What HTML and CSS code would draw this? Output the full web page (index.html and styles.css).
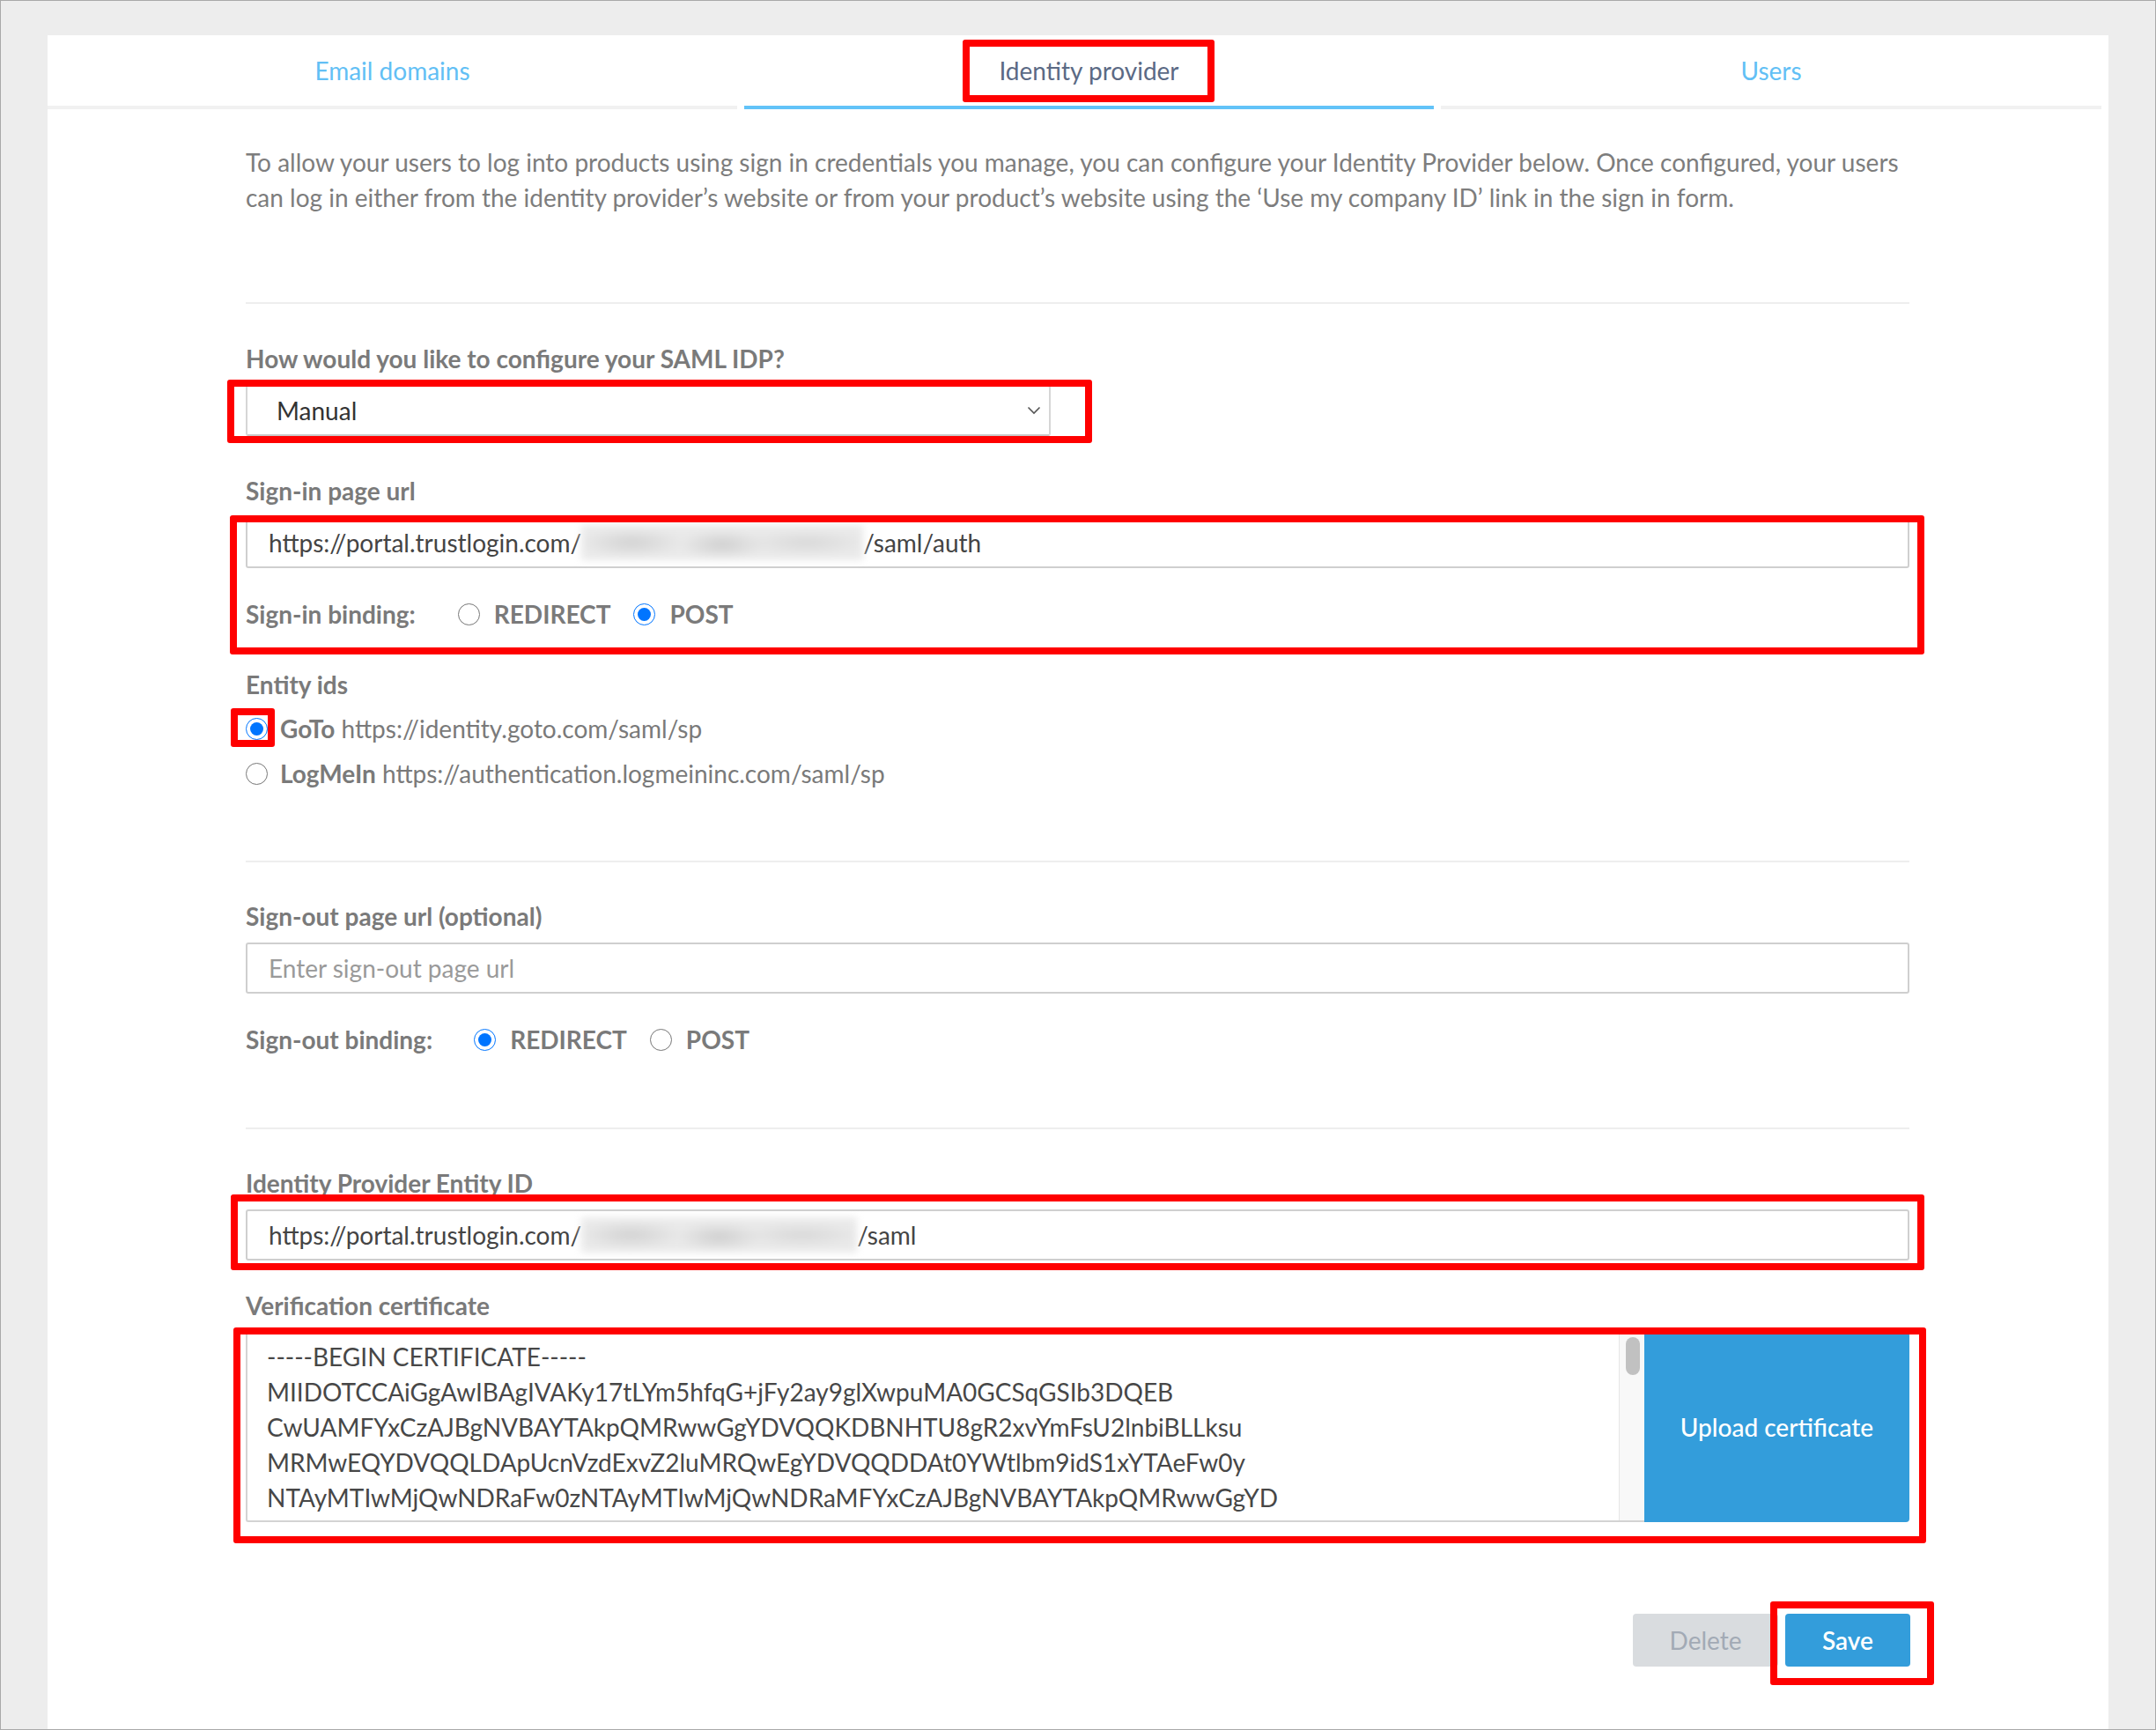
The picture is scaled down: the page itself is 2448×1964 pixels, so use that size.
FILE: index.html
```html
<!DOCTYPE html>
<html lang="en">
<head>
    <meta charset="UTF-8">
    <title>Company ID - Identity provider</title>
    <link rel="stylesheet" href="styles.css">
</head>
<body>
    <div class="frame">
        <div class="panel">
            <nav class="tabs">
                <a class="tab" href="#">Email domains</a>
                <a class="tab tab-active" href="#">Identity provider</a>
                <a class="tab" href="#">Users</a>
            </nav>

            <div class="content">
                <p class="intro">To allow your users to log into products using sign in credentials you manage, you can configure your Identity Provider below. Once configured, your users can log in either from the identity provider&rsquo;s website or from your product&rsquo;s website using the &lsquo;Use my company ID&rsquo; link in the sign in form.</p>

                <hr class="divider divider-first">

                <div class="field-label after-divider">How would you like to configure your SAML IDP?</div>
                <div class="select">
                    <span>Manual</span>
                    <svg class="chevron" width="16" height="10" viewBox="0 0 16 10"><path d="M1.5 1.5 L8 8 L14.5 1.5" fill="none" stroke="#555" stroke-width="1.6"/></svg>
                </div>

                <div class="field-label after-field">Sign-in page url</div>
                <div class="text-input"><span>https://portal.trustlogin.com/</span><span class="blur blur-auth"></span><span>/saml/auth</span></div>

                <div class="binding">
                    <span class="binding-title">Sign-in binding:</span>
                    <label class="choice"><input type="radio" name="signin"> REDIRECT</label>
                    <label class="choice"><input type="radio" name="signin" checked> POST</label>
                </div>

                <div class="field-label after-binding">Entity ids</div>
                <label class="entity entity-first"><input type="radio" name="entity" checked> <span><b>GoTo</b> https://identity.goto.com/saml/sp</span></label>
                <label class="entity"><input type="radio" name="entity"> <span><b>LogMeIn</b> https://authentication.logmeininc.com/saml/sp</span></label>

                <hr class="divider divider-mid">

                <div class="field-label after-divider-small">Sign-out page url (optional)</div>
                <input class="text-input" type="text" placeholder="Enter sign-out page url">

                <div class="binding">
                    <span class="binding-title binding-title-out">Sign-out binding:</span>
                    <label class="choice"><input type="radio" name="signout" checked> REDIRECT</label>
                    <label class="choice"><input type="radio" name="signout"> POST</label>
                </div>

                <hr class="divider divider-last">

                <div class="field-label after-divider-small">Identity Provider Entity ID</div>
                <div class="text-input"><span>https://portal.trustlogin.com/</span><span class="blur blur-entity"></span><span>/saml</span></div>

                <div class="field-label after-input">Verification certificate</div>
                <div class="cert">
                    <div class="cert-input">
                        <div class="cert-text">-----BEGIN CERTIFICATE-----
MIIDOTCCAiGgAwIBAgIVAKy17tLYm5hfqG+jFy2ay9glXwpuMA0GCSqGSIb3DQEB
CwUAMFYxCzAJBgNVBAYTAkpQMRwwGgYDVQQKDBNHTU8gR2xvYmFsU2lnbiBLLksu
MRMwEQYDVQQLDApUcnVzdExvZ2luMRQwEgYDVQQDDAt0YWtlbm9idS1xYTAeFw0y
NTAyMTIwMjQwNDRaFw0zNTAyMTIwMjQwNDRaMFYxCzAJBgNVBAYTAkpQMRwwGgYD</div>
                        <div class="scroll-track"><div class="scroll-thumb"></div></div>
                    </div>
                    <button class="upload" type="button">Upload certificate</button>
                </div>

                <div class="actions">
                    <button class="btn btn-delete" type="button">Delete</button>
                    <button class="btn btn-save" type="button">Save</button>
                </div>
            </div>
        </div>

        <!-- red annotation boxes drawn over the screenshot -->
        <div class="mark mark-tab"></div>
        <div class="mark mark-select"></div>
        <div class="mark mark-signin"></div>
        <div class="mark mark-goto"></div>
        <div class="mark mark-entity"></div>
        <div class="mark mark-cert"></div>
        <div class="mark mark-save"></div>
    </div>
</body>
</html>
```

FILE: styles.css
```css
/* page frame */
body {
    margin: 0;
    font-family: "Lato", "Open Sans", sans-serif;
}

.frame {
    position: relative;
    width: 2448px;
    height: 1964px;
    box-sizing: border-box;
    border: 1px solid #a9a9a9;
    background: #ededed;
    padding: 39px 0 0 53px;
    overflow: hidden;
}

.panel {
    width: 2340px;
    min-height: 1960px;
    background: #fff;
}

/* tabs */
.tabs {
    display: grid;
    grid-template-columns: 783px 783px 750px;
    column-gap: 8px;
}

.tab {
    height: 80px;
    line-height: 80px;
    text-align: center;
    font-size: 28px;
    color: #62bff5;
    text-decoration: none;
    border-bottom: 4px solid #f1f1f1;
}

.tab-active {
    color: #5b6a85;
    border-bottom-color: #62c3f8;
}

/* form */
.content {
    padding: 0 226px 0 225px;
}

.intro {
    margin: 40px 0 0;
    font-size: 28px;
    line-height: 40px;
    color: #7d7d7d;
}

.divider {
    border: 0;
    height: 2px;
    margin: 0;
    background: #eeeeee;
}
.divider-first { margin-top: 99px; }
.divider-mid { margin-top: 79px; }
.divider-last { margin-top: 80px; }

.field-label {
    font-size: 28px;
    line-height: 40px;
    font-weight: 700;
    color: #7a7a7a;
    margin-bottom: 10px;
}
.after-divider { margin-top: 42px; }
.after-divider-small { margin-top: 41px; }
.after-field { margin-top: 42px; }
.after-binding { margin-top: 40px; }
.after-input { margin-top: 31px; }

.select {
    width: 914px;
    height: 58px;
    box-sizing: border-box;
    border: 2px solid #d6d6d6;
    border-bottom-color: #c9c9c9;
    border-radius: 3px;
    padding: 0 9px 0 33px;
    display: flex;
    align-items: center;
    justify-content: space-between;
    font-size: 28px;
    color: #333;
}

.text-input {
    display: flex;
    align-items: center;
    width: 100%;
    height: 58px;
    box-sizing: border-box;
    border: 2px solid #cfcfcf;
    border-radius: 3px;
    padding: 0 24px;
    font-family: inherit;
    font-size: 28px;
    color: #444;
    outline: none;
}

.text-input::placeholder {
    color: #9a9a9a;
}

.blur {
    display: inline-block;
    height: 40px;
    background:
        radial-gradient(ellipse 60px 16px at 18% 50%, #d2d2d2, transparent),
        radial-gradient(ellipse 50px 16px at 50% 55%, #cfcfcf, transparent),
        radial-gradient(ellipse 70px 14px at 80% 50%, #d8d8d8, transparent),
        #eaeaea;
    filter: blur(4px);
}
.blur-auth { width: 320px; }
.blur-entity { width: 313px; }

/* radio rows */
input[type="radio"] {
    width: 25px;
    height: 25px;
    margin: 0;
    accent-color: #0075ff;
}

.binding {
    display: flex;
    align-items: center;
    height: 40px;
    margin-top: 32px;
    font-size: 28px;
    font-weight: 700;
    color: #7a7a7a;
}

.binding-title {
    margin-right: 48px;
}
.binding-title-out {
    margin-right: 47px;
}

.choice {
    display: flex;
    align-items: center;
    gap: 16px;
    margin-right: 26px;
}

.entity {
    display: flex;
    align-items: center;
    gap: 14px;
    height: 40px;
    margin-top: 11px;
    font-size: 28px;
    color: #7a7a7a;
}
.entity-first { margin-top: 0; }

/* certificate */
.cert {
    display: flex;
    height: 216px;
}

.cert-input {
    flex: 1;
    display: flex;
    border: 2px solid #d3d3d3;
    border-right: none;
    border-radius: 3px 0 0 3px;
    overflow: hidden;
}

.cert-text {
    flex: 1;
    padding: 6px 0 0 22px;
    font-size: 28px;
    line-height: 40px;
    color: #474747;
    white-space: pre;
    overflow: hidden;
}

.scroll-track {
    width: 29px;
    background: #f8f8f8;
    border-left: 1px solid #e6e6e6;
    padding: 4px 0 0 7px;
    box-sizing: border-box;
}

.scroll-thumb {
    width: 16px;
    height: 43px;
    border-radius: 8px;
    background: #c1c1c1;
}

.upload {
    width: 301px;
    border: none;
    border-radius: 0 4px 4px 0;
    background: #339ddb;
    color: #fff;
    font-family: inherit;
    font-size: 28px;
    font-weight: 500;
}

/* buttons */
.actions {
    display: flex;
    justify-content: flex-end;
    gap: 8px;
    margin: 104px -1px 0 0;
}

.btn {
    height: 60px;
    border: none;
    border-radius: 4px;
    font-family: inherit;
    font-size: 28px;
}

.btn-delete {
    width: 165px;
    background: #d9dcdf;
    color: #a2aab5;
}

.btn-save {
    width: 142px;
    background: #339ddb;
    color: #fff;
    font-weight: 600;
}

/* annotations */
.mark {
    position: absolute;
    box-sizing: border-box;
    border: 8px solid #ff0000;
    border-radius: 3px;
}
.mark-tab { left: 1092px; top: 44px; width: 286px; height: 71px; }
.mark-select { left: 257px; top: 430px; width: 982px; height: 72px; }
.mark-signin { left: 260px; top: 584px; width: 1924px; height: 158px; }
.mark-goto { left: 261px; top: 803px; width: 50px; height: 44px; }
.mark-entity { left: 261px; top: 1355px; width: 1923px; height: 86px; }
.mark-cert { left: 264px; top: 1506px; width: 1922px; height: 245px; }
.mark-save { left: 2009px; top: 1817px; width: 186px; height: 95px; }
```
